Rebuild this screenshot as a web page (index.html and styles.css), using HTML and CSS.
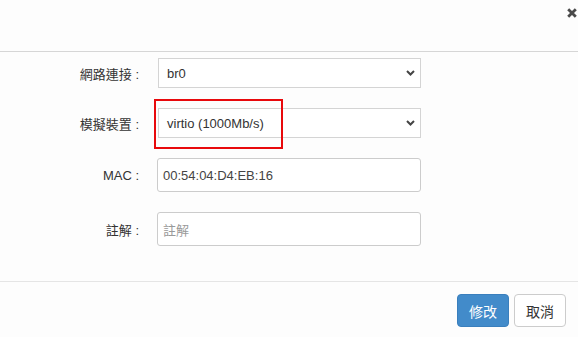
FILE: index.html
```html
<!DOCTYPE html>
<html lang="zh-Hant">
<head>
<meta charset="utf-8">
<title>網路設定</title>
<link rel="stylesheet" href="styles.css">
</head>
<body>
<div class="modal">
  <div class="modal-header">
    <span class="close" aria-label="close">
      <svg width="10" height="10" viewBox="0 0 10 10"><path d="M1.2 1.2 L8.8 8.8 M8.8 1.2 L1.2 8.8" stroke="#4a4a4a" stroke-width="2.8" fill="none"/></svg>
    </span>
  </div>
  <div class="modal-body">
    <div class="row row-select">
      <label class="label">網路連接 :</label>
      <div class="select">
        <span class="select-text">br0</span>
        <svg class="chev" width="9" height="6" viewBox="0 0 9 6"><path d="M1 1 L4.5 4.5 L8 1" stroke="#444" stroke-width="2" fill="none"/></svg>
      </div>
    </div>
    <div class="row row-select">
      <label class="label">模擬裝置 :</label>
      <div class="select highlighted">
        <span class="select-text">virtio (1000Mb/s)</span>
        <svg class="chev" width="9" height="6" viewBox="0 0 9 6"><path d="M1 1 L4.5 4.5 L8 1" stroke="#444" stroke-width="2" fill="none"/></svg>
        <span class="redbox"></span>
      </div>
    </div>
    <div class="row row-input">
      <label class="label">MAC :</label>
      <div class="input"><span class="input-text">00:54:04:D4:EB:16</span></div>
    </div>
    <div class="row row-input">
      <label class="label">註解 :</label>
      <div class="input"><span class="placeholder">註解</span></div>
    </div>
  </div>
  <div class="modal-footer">
    <button class="btn btn-primary">修改</button>
    <button class="btn btn-default">取消</button>
  </div>
</div>
</body>
</html>
```
FILE: styles.css
```css
html, body {
  margin: 0;
  padding: 0;
  background: #fdfdfd;
}
body {
  font-family: "Liberation Sans", "Noto Sans CJK TC", sans-serif;
  font-size: 13px;
  color: #333;
  width: 578px;
  height: 337px;
  overflow: hidden;
}
.modal-header {
  height: 51px;
  border-bottom: 1px solid #d6d6d6;
  display: flex;
  justify-content: flex-end;
  align-items: flex-start;
  padding-right: 1px;
  box-sizing: content-box;
}
.close {
  display: block;
  margin-top: 8px;
  width: 10px;
  height: 10px;
}
.close svg { display: block; }
.modal-body {
  padding: 6px 0 35px 0;
  display: flex;
  flex-direction: column;
  gap: 20px;
}
.row {
  display: flex;
  align-items: center;
}
.row-select { height: 30px; }
.row-input { height: 34px; }
.label {
  width: 139px;
  text-align: right;
  margin-right: 19px;
  color: #333;
  white-space: pre;
}
.select {
  position: relative;
  width: 263px;
  height: 30px;
  box-sizing: border-box;
  border: 1px solid #d4d4d4;
  background: #fff;
  display: flex;
  align-items: center;
  justify-content: space-between;
  padding: 0 5px 0 8px;
  color: #333;
}
.chev { display: block; }
.redbox {
  position: absolute;
  left: -5px;
  top: -10px;
  width: 129px;
  height: 50px;
  box-sizing: border-box;
  border: 2px solid #e8090c;
}
.input {
  width: 264px;
  height: 34px;
  margin-left: -1px;
  box-sizing: border-box;
  border: 1px solid #ccc;
  border-radius: 3px;
  background: #fff;
  display: flex;
  align-items: center;
  padding: 0 5px;
}
.input-text { color: #444; }
.placeholder { color: #999; }
.modal-footer {
  border-top: 1px solid #e5e5e5;
  display: flex;
  justify-content: flex-end;
  gap: 5px;
  padding: 12px 12px 0 0;
}
.btn {
  width: 52px;
  height: 33px;
  font-family: "Liberation Sans", "Noto Sans CJK TC", sans-serif;
  font-size: 14px;
  border-radius: 4px;
  padding: 0;
  margin: 0;
  cursor: pointer;
}
.btn-primary {
  background: #428bca;
  border: 1px solid #3a7fbd;
  color: #fff;
}
.btn-default {
  background: #fff;
  border: 1px solid #ccc;
  color: #333;
}
```
